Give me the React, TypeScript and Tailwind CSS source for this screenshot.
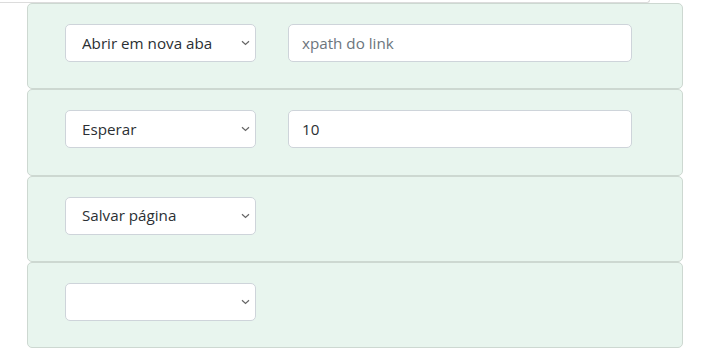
import { useState } from "react";

const FONT = "font-['Open_Sans','Noto_Sans',sans-serif]";

type Row = { action: string; value?: string; placeholder?: string; hasInput: boolean };

const ROWS: Row[] = [
  { action: "Abrir em nova aba", value: "", placeholder: "xpath do link", hasInput: true },
  { action: "Esperar", value: "10", hasInput: true },
  { action: "Salvar página", hasInput: false },
  { action: "", hasInput: false },
];

function Chevron() {
  return (
    <svg width="9" height="6" viewBox="0 0 9 6" className="pointer-events-none absolute right-[6px] top-1/2 -translate-y-1/2">
      <path d="M1 1.2 L4.5 4.5 L8 1.2" fill="none" stroke="#666" strokeWidth="1.2" />
    </svg>
  );
}

function StepCard({ row }: { row: Row }) {
  const [value, setValue] = useState(row.value ?? "");
  return (
    <div className="flex h-[86.25px] items-start gap-[32px] rounded-[5px] border border-[#cdd8d1] bg-[#e8f5ee] pl-[37px] pt-[20px]">
      <div className="relative h-[38px] w-[191px]">
        <select
          defaultValue={row.action}
          className={`h-full w-full appearance-none rounded-[5px] border border-[#ced4da] bg-white pl-[16px] pr-6 text-[15.2px] text-[#2b2f33] outline-none ${FONT}`}
        >
          <option value={row.action}>{row.action}</option>
        </select>
        <Chevron />
      </div>
      {row.hasInput && (
        <input
          type="text"
          value={value}
          onChange={(e) => setValue(e.target.value)}
          placeholder={row.placeholder}
          className={`h-[38px] w-[344px] rounded-[5px] border border-[#ced4da] bg-white pl-[13px] pr-3 text-[15.2px] text-[#2b2f33] outline-none placeholder:text-[#6c757d] ${FONT}`}
        />
      )}
    </div>
  );
}

export default function App() {
  return (
    <div className="h-[364px] w-[719px] overflow-hidden bg-white">
      <div className="h-[3px] w-[650px] rounded-br-[4px] border-b border-r border-[#dcdcdc]" />
      <div className="ml-[27px] w-[656px]">
        {ROWS.map((row, i) => (
          <StepCard key={i} row={row} />
        ))}
      </div>
    </div>
  );
}
